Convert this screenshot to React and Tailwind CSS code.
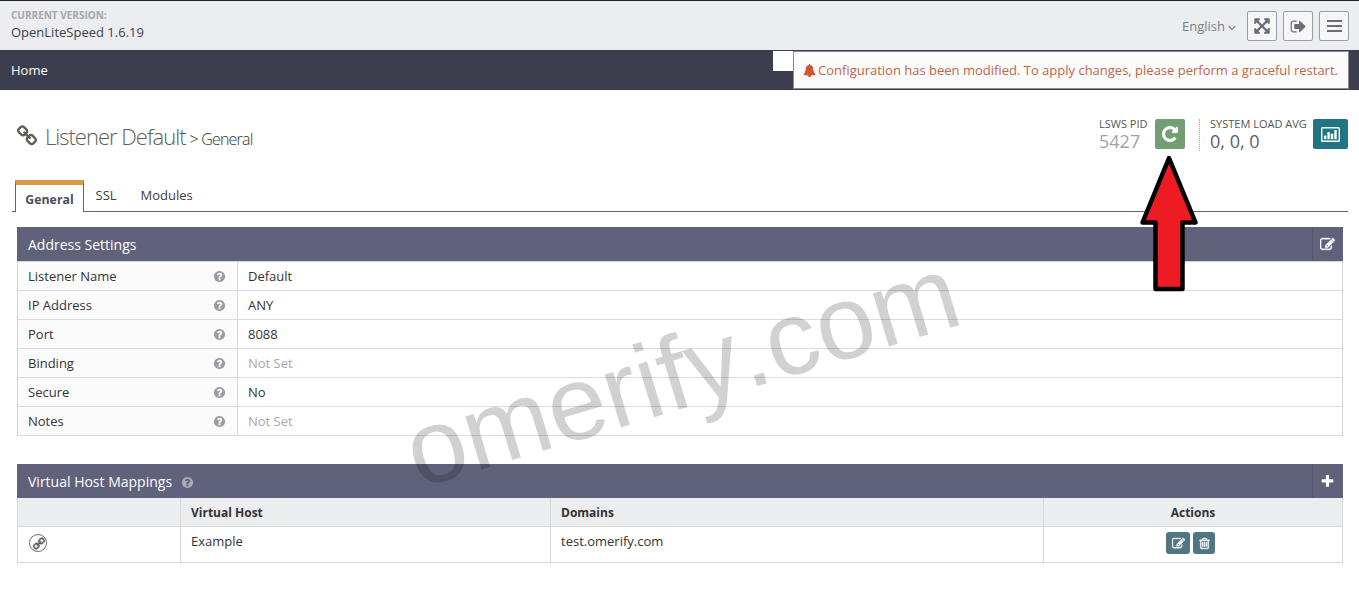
import React from "react";

const PATHS = {
  help: "M1024 1376v-192q0-14-9-23t-23-9h-192q-14 0-23 9t-9 23v192q0 14 9 23t23 9h192q14 0 23-9t9-23zm256-672q0-88-55.5-163t-138.5-116-170-41q-243 0-371 213-15 24 8 42l132 100q7 6 19 6 16 0 25-12 53-68 86-92 34-24 86-24 48 0 85.5 26t37.5 59q0 38-20 61t-68 45q-63 28-115.5 86.5t-52.5 125.5v36q0 14 9 23t23 9h192q14 0 23-9t9-23q0-19 21.5-49.5t54.5-49.5q32-18 49-28.5t46-35 44.5-48 28-60.5 12.5-81zm384 192q0 209-103 385.5t-279.5 279.5-385.5 103-385.5-103-279.5-279.5-103-385.5 103-385.5 279.5-279.5 385.5-103 385.5 103 279.5 279.5 103 385.5z",
  plus: "M1600 736v192q0 40-28 68t-68 28h-416v416q0 40-28 68t-68 28h-192q-40 0-68-28t-28-68v-416h-416q-40 0-68-28t-28-68v-192q0-40 28-68t68-28h416v-416q0-40 28-68t68-28h192q40 0 68 28t28 68v416h416q40 0 68 28t28 68z",
  repeat: "M1664 256v448q0 26-19 45t-45 19h-448q-42 0-59-40-17-39 14-69l138-138q-148-137-349-137-104 0-198.5 40.5t-163.5 109.5-109.5 163.5-40.5 198.5 40.5 198.5 109.5 163.5 163.5 109.5 198.5 40.5q119 0 225-52t179-147q7-10 23-12 15 0 25 9l137 138q9 8 9.5 20.5t-7.5 22.5q-109 132-264 204.5t-327 72.5q-156 0-298-61t-245-164-164-245-61-298 61-298 164-245 245-164 298-61q147 0 284.5 55.5t244.5 156.5l130-129q29-31 70-14 39 17 39 59z",
  edit: "M888 1184l116-116-152-152-116 116v56h96v96h56zm440-720q-16-16-33 1l-350 350q-17 17-1 33t33-1l350-350q17-17 1-33zm80 594v190q0 119-84.5 203.5t-203.5 84.5h-832q-119 0-203.5-84.5t-84.5-203.5v-832q0-119 84.5-203.5t203.5-84.5h832q63 0 117 25 15 7 18 23 3 17-9 29l-49 49q-14 14-32 8-23-6-45-6h-832q-66 0-113 47t-47 113v832q0 66 47 113t113 47h832q66 0 113-47t47-113v-126q0-13 9-22l64-64q15-15 35-7t20 29zm-96-738l288 288-672 672h-288v-288zm444 132l-92 92-288-288 92-92q28-28 68-28t68 28l152 152q28 28 28 68t-28 68z",
  trash: "M704 736v576q0 14-9 23t-23 9h-64q-14 0-23-9t-9-23v-576q0-14 9-23t23-9h64q14 0 23 9t9 23zm256 0v576q0 14-9 23t-23 9h-64q-14 0-23-9t-9-23v-576q0-14 9-23t23-9h64q14 0 23 9t9 23zm256 0v576q0 14-9 23t-23 9h-64q-14 0-23-9t-9-23v-576q0-14 9-23t23-9h64q14 0 23 9t9 23zm128 724v-948h-896v948q0 22 7 40.5t14.5 27 10.5 8.5h832q3 0 10.5-8.5t14.5-27 7-40.5zm-672-1076h448l-48-117q-7-9-17-11h-317q-10 2-17 11zm928 32v64q0 14-9 23t-23 9h-96v948q0 83-47 143.5t-113 60.5h-832q-66 0-113-58.5t-47-141.5v-952h-96q-14 0-23-9t-9-23v-64q0-14 9-23t23-9h309l70-167q15-37 54-63t79-26h320q40 0 79 26t54 63l70 167h309q14 0 23 9t9 23z",
  bell: "M912 1696q0-16-16-16-59 0-101.5-42.5t-42.5-101.5q0-16-16-16t-16 16q0 73 51.5 124.5t124.5 51.5q16 0 16-16zm816-288q0 52-38 90t-90 38h-448q0 106-75 181t-181 75-181-75-75-181h-448q-52 0-90-38t-38-90q50-42 91-88t85-119.5 74.5-158.5 50-206 19.5-260q0-152 117-282.5t307-158.5q-8-19-8-39 0-40 28-68t68-28 68 28 28 68q0 20-8 39 190 28 307 158.5t117 282.5q0 139 19.5 260t50 206 74.5 158.5 85 119.5 91 88z",
  signOut: "M704 1440q0 4 1 20t.5 26.5-3 23.5-10 19.5-20.5 6.5h-320q-119 0-203.5-84.5t-84.5-203.5v-704q0-119 84.5-203.5t203.5-84.5h320q13 0 22.5 9.5t9.5 22.5q0 4 1 20t.5 26.5-3 23.5-10 19.5-20.5 6.5h-320q-66 0-113 47t-47 113v704q0 66 47 113t113 47h312l11.5 1 11.5 3 8 5.5 7 9 2 13.5zm928-544q0 26-19 45l-544 544q-19 19-45 19t-45-19-19-45v-288h-448q-26 0-45-19t-19-45v-384q0-26 19-45t45-19h448v-288q0-26 19-45t45-19 45 19l544 544q19 19 19 45z",
  expand: "M1411 541l-355 355 355 355 144-144q29-31 70-14 39 17 39 59v448q0 26-19 45t-45 19h-448q-42 0-59-40-17-39 14-69l144-144-355-355-355 355 144 144q31 30 14 69-17 40-59 40h-448q-26 0-45-19t-19-45v-448q0-42 40-59 39-17 69 14l144 144 355-355-355-355-144 144q-19 19-45 19-12 0-24-5-40-17-40-59v-448q0-26 19-45t45-19h448q42 0 59 40 17 39-14 69l-144 144 355 355 355-355-144-144q-31-30-14-69 17-40 59-40h448q26 0 45 19t19 45v448q0 42-39 59-13 5-25 5-26 0-45-19z",
  link: "M1520 1216q0-40-28-68l-208-208q-28-28-68-28-42 0-72 32 3 3 19 18.5t21.5 21.5 15 19 13 25.5 3.5 27.5q0 40-28 68t-68 28q-15 0-27.5-3.5t-25.5-13-19-15-21.5-21.5-18.5-19q-33 31-33 73 0 40 28 68l206 207q27 27 68 27 40 0 68-26l147-146q28-28 28-67zm-703-705q0-40-28-68l-206-207q-28-28-68-28-39 0-68 27l-147 146q-28 28-28 67 0 40 28 68l208 208q27 27 68 27 42 0 72-31-3-3-19-18.5t-21.5-21.5-15-19-13-25.5-3.5-27.5q0-40 28-68t68-28q15 0 27.5 3.5t25.5 13 19 15 21.5 21.5 18.5 19q33-31 33-73zm895 705q0 120-85 203l-147 146q-83 83-203 83-121 0-204-85l-206-207q-83-83-83-203 0-123 88-209l-88-88q-86 88-208 88-120 0-204-84l-208-208q-84-84-84-204t85-203l147-146q83-83 203-83 121 0 204 85l206 207q83 83 83 203 0 123-88 209l88 88q86-88 208-88 120 0 204 84l208 208q84 84 84 204z",
};

function Icon({ name, className }) {
  return (
    <svg viewBox="0 0 1792 1792" className={`shrink-0 fill-current ${className}`} aria-hidden="true">
      <path d={PATHS[name]} />
    </svg>
  );
}

function HeaderButton({ children }) {
  return (
    <button className="flex size-[30px] items-center justify-center rounded-[2px] border border-[#9b9da6] bg-[#f6f6f7] text-[#6a6c78]">
      {children}
    </button>
  );
}

function Header() {
  return (
    <header className="flex h-[50px] justify-between border-t border-[#231f26] bg-[#ecedf0] pl-[11px] pr-[10px]">
      <div className="pt-[7px]">
        <div className="text-[10px] leading-[14px] font-bold text-[#a5a7aa]">CURRENT VERSION:</div>
        <div className="mt-px text-[13px] leading-[18px] text-[#3f4045]">OpenLiteSpeed 1.6.19</div>
      </div>
      <div className="flex items-start pt-[10px]">
        <div className="mr-[11px] flex h-[31px] items-center text-[13px] text-[#7b7d87]">
          English
          <svg viewBox="0 0 8 6" className="ml-[3px] mt-[2px] h-[6px] w-[8px] fill-none stroke-current">
            <path d="M0.7 1L4 4.4L7.3 1" strokeWidth="1.1" />
          </svg>
        </div>
        <div className="flex gap-[6px]">
          <HeaderButton><Icon name="expand" className="size-[18px]" /></HeaderButton>
          <HeaderButton><Icon name="signOut" className="size-[17px]" /></HeaderButton>
          <HeaderButton>
            <span className="flex w-[15px] flex-col gap-[3px]">
              <i className="h-[2px] bg-current" />
              <i className="h-[2px] bg-current" />
              <i className="h-[2px] bg-current" />
            </span>
          </HeaderButton>
        </div>
      </div>
    </header>
  );
}

function Ribbon() {
  return (
    <div className="flex h-[40px] items-start justify-between bg-[#3c3e4d] pl-[11px] pr-[10px]">
      <div className="flex h-[40px] items-center pt-[2px] text-[13px] font-medium text-white">Home</div>
      <div className="flex pt-px">
        <div className="h-[20px] w-[20px] bg-white" />
        <div className="flex h-[38px] w-[556px] items-center border border-[#8a8b94] bg-[#fbfbfb] pl-[9px] pt-[2px] text-[13px] whitespace-nowrap text-[#bf6648]">
          <Icon name="bell" className="mr-[2px] mb-[1px] size-[13px] text-[#d1562d]" />
          Configuration has been modified. To apply changes, please perform a graceful restart.
        </div>
      </div>
    </div>
  );
}

function TitleRow() {
  return (
    <div className="flex h-[90px] justify-between pl-[16px] pr-[11px]">
      <h1 className="flex items-center pt-[2px] text-[22px] font-light tracking-[-1px] text-[#5e5f52]">
        <Icon name="link" className="mr-[7px] size-[22px]" />
        <span className="flex items-baseline whitespace-pre">
          Listener Default
          <span className="ml-[4px] text-[16px] tracking-[-0.8px] text-[#333]">&gt; General</span>
        </span>
      </h1>
      <div className="flex items-start pt-[27px]">
        <div className="-mt-px w-[56px]">
          <div className="text-[11px] leading-[15px] text-[#555]">LSWS PID</div>
          <div className="text-[18px] leading-[20px] text-[#a0a2a8]">5427</div>
        </div>
        <button className="mt-[2px] flex size-[30px] items-center justify-center rounded-[2px] bg-[#739e73] text-white">
          <Icon name="repeat" className="size-[18px] stroke-white stroke-[60]" />
        </button>
        <div className="ml-[14px] mt-[2px] h-[32px] border-l border-dotted border-[#aaa]" />
        <div className="-mt-px ml-[10px] w-[103px]">
          <div className="text-[11px] leading-[15px] whitespace-nowrap text-[#555]">SYSTEM LOAD AVG</div>
          <div className="text-[18px] leading-[20px] text-[#5c5e6a]">0, 0, 0</div>
        </div>
        <button className="mt-[2px] flex h-[30px] w-[35px] items-center justify-center rounded-[2px] bg-[#1f7583]">
          <svg viewBox="0 0 19 15" className="mt-px h-[15px] w-[19px] fill-white">
            <path d="M1.5 0h16q1.5 0 1.5 1.5v12q0 1.5-1.5 1.5h-16q-1.500 0-1.500-1.500v-12q0-1.500 1.500-1.500zM1.400 1.400v12.200h16.200v-12.200z" fillRule="evenodd" />
            <path d="M3 8.500h2.400v3.800H3zM6.400 5h2.400v7.300H6.400zM9.800 6.800h2.400v5.500H9.800zM13.300 3h2.400v9.300h-2.400z" />
          </svg>
        </button>
      </div>
    </div>
  );
}

function Tabs() {
  return (
    <nav className="ml-[12px] mr-[11px] flex h-[32px] text-[13px] text-[#3b3c44]">
      <div className="w-[3px] border-b border-[#62636f]" />
      <div className="flex w-[69px] justify-center border-x border-t-[5px] border-x-[#62636f] border-t-[#d89a47] pt-[6px] text-[12.3px] font-bold text-[#4d4f5a]">
        General
      </div>
      <div className="flex flex-1 gap-[24px] border-b border-[#62636f] pl-[11.500px] pt-[6px]">
        <span>SSL</span>
        <span>Modules</span>
      </div>
    </nav>
  );
}

const SETTINGS = [
  ["Listener Name", "Default"],
  ["IP Address", "ANY"],
  ["Port", "8088"],
  ["Binding", null],
  ["Secure", "No"],
  ["Notes", null],
];

function PanelHead({ title, help, icon, iconClass }) {
  return (
    <div className="flex h-[34px] items-center justify-between bg-[#60627c] pl-[11px] text-[14px] text-white">
      <div className="flex items-center">
        {title}
        {help && <Icon name="help" className="ml-[9px] mt-[2px] size-[13px] text-[#a9aab5]" />}
      </div>
      <div className="flex h-[34px] w-[31px] items-center justify-center border-l border-[#55576d] pr-[2px]">
        <Icon name={icon} className={iconClass} />
      </div>
    </div>
  );
}

function AddressSettings() {
  return (
    <section className="ml-[17px] mr-[16px] mt-[15px]">
      <PanelHead title="Address Settings" icon="edit" iconClass="size-[15px] stroke-white stroke-[50]" />
      <div className="border-x border-t border-[#d3d4da] text-[13px] text-[#333]">
        {SETTINGS.map(([label, value]) => (
          <div key={label} className="flex h-[29px] border-b border-[#dadbdf] leading-[28px]">
            <div className="flex w-[220px] items-center justify-between border-r border-[#dadbdf] bg-[#fbfbfb] pl-[10px] pr-[11px]">
              {label}
              <Icon name="help" className="size-[13px] text-[#9a9ba3]" />
            </div>
            {value ? (
              <div className="pl-[10px]">{value}</div>
            ) : (
              <div className="pl-[10px] text-[#a6a7ab]">Not Set</div>
            )}
          </div>
        ))}
      </div>
    </section>
  );
}

function SmallButton({ icon, className }) {
  return (
    <button className={`flex h-[22px] items-center justify-center rounded-[3px] bg-[#507683] text-white ${className}`}>
      <Icon name={icon} className="size-[13px] stroke-white stroke-[50]" />
    </button>
  );
}

function HostMappings() {
  return (
    <section className="ml-[17px] mr-[16px] mt-[28px] text-[13px] text-[#333]">
      <PanelHead title="Virtual Host Mappings" help icon="plus" iconClass="size-[15px]" />
      <div className="grid h-[29px] grid-cols-[163px_370px_493px_1fr] border-x border-b border-[#d6d7dc] bg-[#ecedef] text-[12px] leading-[30px] font-bold">
        <div className="border-r border-[#d6d7dc]" />
        <div className="border-r border-[#d6d7dc] pl-[10px]">Virtual Host</div>
        <div className="border-r border-[#d6d7dc] pl-[10px]">Domains</div>
        <div className="text-center">Actions</div>
      </div>
      <div className="grid h-[36px] grid-cols-[163px_370px_493px_1fr] border-x border-b border-[#d6d7dc] leading-[28px]">
        <div className="border-r border-[#d6d7dc] pl-[11px] pt-[7px]">
          <span className="flex size-[18px] items-center justify-center rounded-full border-[1.500px] border-[#6b6c76] text-[#5f6068]">
            <Icon name="link" className="size-[13px] rotate-90 stroke-current stroke-[50]" />
          </span>
        </div>
        <div className="border-r border-[#d6d7dc] pl-[10px]">Example</div>
        <div className="border-r border-[#d6d7dc] pl-[10px]">test.omerify.com</div>
        <div className="flex justify-center gap-[3px] pt-[5px] pr-[5px]">
          <SmallButton icon="edit" className="w-[24px]" />
          <SmallButton icon="trash" className="w-[22px]" />
        </div>
      </div>
    </section>
  );
}

export default function App() {
  return (
    <div className="relative h-[608px] w-[1359px] overflow-hidden bg-white font-['Open_Sans',sans-serif]">
      <Header />
      <Ribbon />
      <TitleRow />
      <Tabs />
      <AddressSettings />
      <HostMappings />

      {/* Watermark and pointer arrow drawn over the page */}
      <svg viewBox="0 0 1359 608" className="pointer-events-none absolute inset-0 h-[608px] w-[1359px]">
        <text
          x="0"
          y="0"
          transform="translate(418.500 488.500) rotate(-16.800)"
          fontSize="105"
          fill="#000"
          fillOpacity="0.18"
          className="font-['Liberation_Sans',Arial,sans-serif] [font-kerning:none]"
        >
          omerify.com
        </text>
        <path
          d="M1169 158L1195.500 222.500H1182.500V289H1155.500V222.500H1142.500Z"
          fill="#ed1c24"
          stroke="#000"
          strokeWidth="4.500"
          strokeLinejoin="round"
        />
      </svg>
    </div>
  );
}
